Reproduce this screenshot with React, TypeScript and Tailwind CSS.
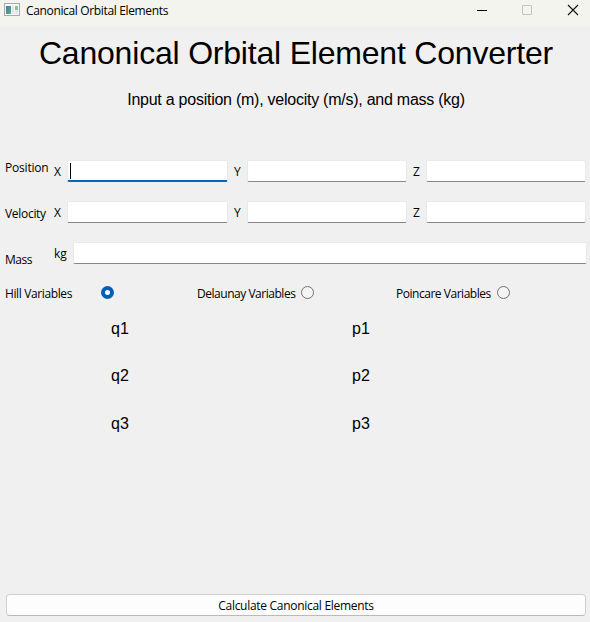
import { useState } from "react";

const ui = "font-['Open_Sans','Noto_Sans',sans-serif] text-[12px] leading-[16px] whitespace-nowrap";
const field =
  "block h-[22px] min-w-0 bg-white border border-[#e9e9e9] border-b-[#868686] rounded-[2px] outline-none";

function Field({ active = false, width }: { active?: boolean; width: string }) {
  return active ? (
    <div className={`flex h-[22px] ${width} items-center rounded-[2px] border border-[#e9e9e9] border-b-2 border-b-[#0067c0] bg-white pl-[2px]`}>
      <span className="h-[16px] w-px bg-black" />
    </div>
  ) : (
    <input className={`${field} ${width}`} />
  );
}

function VectorRow({ active = false }: { active?: boolean }) {
  return (
    <div className="flex h-[22px]">
      <span className="w-[13px] pt-[4px]">X</span>
      <Field active={active} width="w-[161px]" />
      <span className="ml-[6px] w-[13px] pt-[4px]">Y</span>
      <Field width="w-[160px]" />
      <span className="ml-[6px] w-[13px] pt-[4px]">Z</span>
      <Field width="w-[160px]" />
    </div>
  );
}

function Radio({ on }: { on: boolean }) {
  return (
    <span
      className={
        on
          ? "block size-[13px] rounded-full border-4 border-[#005fb8] bg-white"
          : "block size-[13px] rounded-full border border-[#727272] bg-[#f4f4f4]"
      }
    />
  );
}

export default function App() {
  const [selected, setSelected] = useState(0);
  const rows = ["1", "2", "3"];
  return (
    <div className={`flex h-[622px] w-[590px] flex-col overflow-hidden bg-[#f0f0f0] text-black ${ui}`}>
      <header className="flex h-[26px] shrink-0 bg-[#f2f4ed]">
        <svg className="ml-[4px] mt-[3px] shrink-0" width="16" height="14" viewBox="0 0 16 14">
          <defs>
            <linearGradient id="pane" x1="0" y1="0" x2="1" y2="1">
              <stop offset="0" stopColor="#4b77a8" />
              <stop offset="1" stopColor="#55b07c" />
            </linearGradient>
          </defs>
          <rect x="0.5" y="0.5" width="15" height="12" fill="#f5f7f8" stroke="#a5a9b0" />
          <rect x="2" y="3" width="5" height="8" fill="url(#pane)" />
          <rect x="8" y="3" width="2" height="8" fill="#dce4e6" />
          <rect x="11" y="3" width="3" height="4" fill="#91bda9" />
          <rect x="11" y="7" width="3" height="4" fill="#dce8e3" />
        </svg>
        <span className="ml-[6px] mt-[3px] w-[440px] tracking-[-0.35px]">Canonical Orbital Elements</span>
        <svg className="ml-[10px] shrink-0" width="114" height="26" viewBox="476 0 114 26" fill="none">
          <path d="M477 10.5H487" stroke="#000" />
          <rect x="522.5" y="5.5" width="9" height="9" rx="0.5" stroke="#c2c4bf" />
          <path d="M568 5L578 15M578 5L568 15" stroke="#111" strokeWidth="1.1" />
        </svg>
      </header>

      <h1 className="mt-[8px] h-[38px] text-center font-['Liberation_Sans',Arial,sans-serif] text-[32px] leading-[38px] tracking-[-0.2px] pl-[2px]">
        Canonical Orbital Element Converter
      </h1>
      <p className="mt-[18px] h-[20px] pl-[2px] text-center font-['Liberation_Sans',Arial,sans-serif] text-[16px] leading-[20px] tracking-[-0.25px]">
        Input a position (m), velocity (m/s), and mass (kg)
      </p>

      <section className="mt-[50px] flex h-[105px]">
        <div className="flex w-[49px] flex-col gap-[30px] pl-[5px]">
          <span className="tracking-[-0.2px]">Position</span>
          <span className="tracking-[-0.3px]">Velocity</span>
          <span className="tracking-[-0.5px]">Mass</span>
        </div>
        <div className="flex flex-col gap-[19px] pl-[5px]">
          <VectorRow active />
          <VectorRow />
          <div className="flex h-[22px]">
            <span className="w-[19px] pt-[4px]">kg</span>
            <Field width="w-[514px]" />
          </div>
        </div>
      </section>

      <section className="mt-[21px] flex h-[16px] tracking-[-0.47px]">
        <button className="ml-[5px] flex w-[192px] gap-[29px]" onClick={() => setSelected(0)}>
          <span className="w-[67px] text-left tracking-[-0.38px]">Hill Variables</span>
          <Radio on={selected === 0} />
        </button>
        <button className="flex w-[199px] gap-[6px]" onClick={() => setSelected(1)}>
          <span className="w-[98px] text-left">Delaunay Variables</span>
          <Radio on={selected === 1} />
        </button>
        <button className="flex gap-[6px]" onClick={() => setSelected(2)}>
          <span className="w-[95px] text-left">Poincare Variables</span>
          <Radio on={selected === 2} />
        </button>
      </section>

      <section className="mt-[17px] flex flex-col font-['Liberation_Sans',Arial,sans-serif] text-[16px] leading-[20px]">
        {rows.map((n) => (
          <div key={n} className="flex h-[20px] pl-[111px] not-first:mt-[28px] nth-2:mt-[27px]">
            <span className="w-[241px]">q{n}</span>
            <span>p{n}</span>
          </div>
        ))}
      </section>

      <button className="mr-[4px] ml-[6px] mt-auto mb-[6px] h-[22px] shrink-0 rounded-[4px] border border-[#d0d0d0] border-b-[#bababa] bg-[#fdfdfd] pt-px tracking-[-0.29px]">
        Calculate Canonical Elements
      </button>
    </div>
  );
}
